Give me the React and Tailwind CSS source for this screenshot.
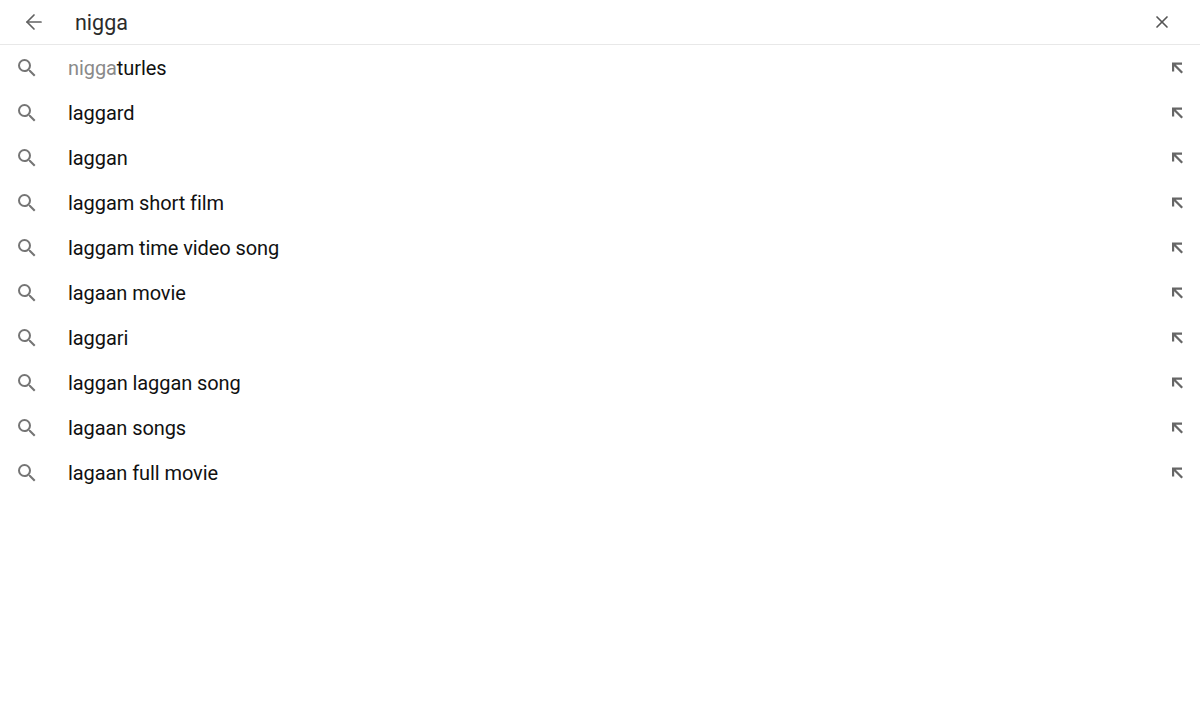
import { ArrowLeft, X } from "lucide-react";

const ROWS = [
  { typed: "nigga", rest: "turles" },
  { rest: "laggard" },
  { rest: "laggan" },
  { rest: "laggam short film" },
  { rest: "laggam time video song" },
  { rest: "lagaan movie" },
  { rest: "laggari" },
  { rest: "laggan laggan song" },
  { rest: "lagaan songs" },
  { rest: "lagaan full movie" },
];

function SearchIcon() {
  return (
    <svg width="24" height="24" viewBox="0 0 24 24" fill="#757575">
      <path d="M15.5 14h-.79l-.28-.27A6.47 6.47 0 0 0 16 9.5 6.5 6.5 0 1 0 9.5 16c1.61 0 3.09-.59 4.23-1.57l.27.28v.79l5 4.99L20.49 19l-4.99-5zm-6 0C7.01 14 5 11.99 5 9.5S7.01 5 9.5 5 14 7.01 14 9.5 11.99 14 9.5 14z" />
    </svg>
  );
}

function FillIcon() {
  return (
    <svg width="24" height="24" viewBox="0 0 24 24" fill="none">
      <path d="M7 6.5h10v2.2h-6.2l7.2 7.2-1.6 1.6-7.2-7.2v5.2H7V6.5z" fill="#666" />
    </svg>
  );
}

export default function App() {
  return (
    <div className="min-h-screen bg-white text-[#111] font-['Roboto',sans-serif]">
      <div className="flex h-[45px] items-center border-b border-[#e8e8e8] pl-[22px] pr-[26px]">
        <ArrowLeft size={24} strokeWidth={1.7} className="text-[#616161]" />
        <div className="ml-[29px] flex-1 pt-[2px] text-[21.5px] text-[#2b2b2b]">nigga</div>
        <X size={20} strokeWidth={2} className="mr-[2px] text-[#555]" />
      </div>
      <div className="flex flex-col">
        {ROWS.map((r) => (
          <div key={r.rest} className="flex h-[45px] items-center pl-[15px] pr-[11px]">
            <SearchIcon />
            <div className="ml-[29px] flex-1 text-[20px] leading-none tracking-[-0.08px]">
              {r.typed ? <span className="text-[#8a8a8a]">{r.typed}</span> : null}
              {r.rest}
            </div>
            <FillIcon />
          </div>
        ))}
      </div>
    </div>
  );
}
